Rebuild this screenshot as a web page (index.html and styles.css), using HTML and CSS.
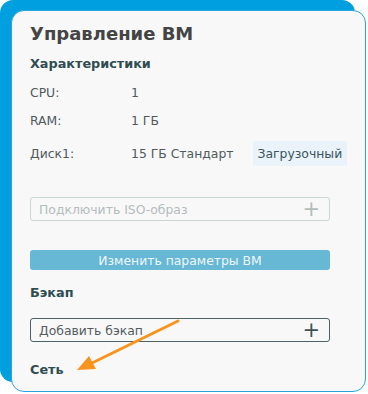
FILE: index.html
```html
<!DOCTYPE html>
<html lang="ru">
<head>
  <meta charset="UTF-8" />
  <title>Управление ВМ</title>
  <link rel="stylesheet" href="styles.css">
</head>
<body>

<div class="card">
  <h1>Управление ВМ</h1>

  <h2 class="section">Характеристики</h2>
  <div class="spec-row">
    <span class="spec-label">CPU:</span>
    <span class="spec-value">1</span>
  </div>
  <div class="spec-row">
    <span class="spec-label">RAM:</span>
    <span class="spec-value">1 ГБ</span>
  </div>
  <div class="spec-row disk-row">
    <span class="spec-label">Диск1:</span>
    <span class="spec-value">15 ГБ Стандарт</span>
    <span class="badge">Загрузочный</span>
  </div>

  <div class="field field-disabled iso-field">
    <span>Подключить ISO-образ</span>
    <span class="plus">+</span>
  </div>

  <button class="wide-button">Изменить параметры ВМ</button>

  <h2 class="section backup-title">Бэкап</h2>
  <div class="field backup-field">
    <span>Добавить бэкап</span>
    <span class="plus">+</span>
  </div>

  <h2 class="section net-title">Сеть</h2>

  <svg class="arrow" width="368" height="394" viewBox="0 0 368 394">
    <line x1="178" y1="321" x2="92" y2="363" stroke="#f7941d" stroke-width="3" stroke-linecap="round" />
    <polygon points="77,370 89,356 96,369" fill="#f7941d" />
  </svg>
</div>

</body>
</html>
```

FILE: styles.css
```css
html, body {
  margin: 0; padding: 0;
  background: #ffffff;
  font-family: 'DejaVu Sans', Verdana, sans-serif;
  overflow: hidden;
}

.card {
  margin: 10px 0 0 11px;
  width: 355px;
  height: 382px;
  box-sizing: border-box;
  padding: 11px 18px 0 18px;
  background: #f8f8f8;
  border: 1px solid #2ea3db;
  border-radius: 13px;
  box-shadow: -11px -10px 0 0 #009fe0;
  color: #505a5c;
  font-size: 12.4px;
}

h1 {
  margin: 0;
  font-size: 18px;
  line-height: 24px;
  font-weight: 700;
  color: #444444;
}

.section {
  margin: 9px 0 0 0;
  font-size: 12.8px;
  line-height: 18px;
  font-weight: 700;
  color: #2f4c52;
}

.spec-row {
  display: flex;
  align-items: center;
  margin-top: 11px;
  line-height: 18px;
  white-space: nowrap;
}

.spec-row + .spec-row {
  margin-top: 10px;
}

.spec-row span {
  flex-shrink: 0;
}

.spec-label {
  width: 101px;
}

.spec-row.disk-row {
  margin-top: 11px;
}

.badge {
  margin-left: 19px;
  padding: 0 5px;
  line-height: 25px;
  background: #eaf3fa;
  color: #3c555c;
}

.field {
  display: flex;
  justify-content: space-between;
  align-items: center;
  width: 300px;
  height: 24px;
  box-sizing: border-box;
  padding: 0 9px 0 8px;
  border: 1px solid #4d6266;
  border-radius: 3px;
  color: #555c5e;
}

.field-disabled {
  border-color: #c9d6d6;
  color: #b4bcbc;
}

.plus {
  font-size: 21px;
  line-height: 20px;
  color: #3d5256;
}

.field-disabled .plus {
  color: #b4bcbc;
}

.iso-field {
  margin-top: 31px;
}

.wide-button {
  display: block;
  width: 300px;
  height: 20px;
  margin-top: 29px;
  padding: 0;
  border: none;
  border-radius: 3px;
  background: #67b8d4;
  color: #eef7fa;
  font-family: inherit;
  font-size: 12.4px;
}

.backup-title {
  margin-top: 14px;
}

.backup-field {
  margin-top: 16px;
}

.net-title {
  margin-top: 19px;
}

.arrow {
  position: absolute;
  top: 0; left: 0;
  pointer-events: none;
}
```
